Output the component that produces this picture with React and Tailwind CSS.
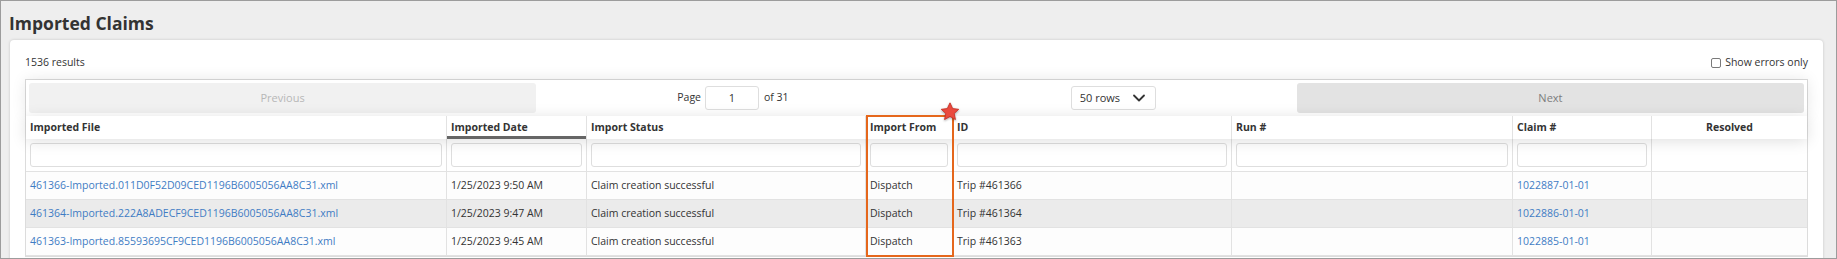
import React from 'react';
import { ChevronDown } from 'lucide-react';

const rows = [
  {
    file: '461366-Imported.011D0F52D09CED1196B6005056AA8C31.xml',
    date: '1/25/2023 9:50 AM',
    id: 'Trip #461366',
    claim: '1022887-01-01',
  },
  {
    file: '461364-Imported.222A8ADECF9CED1196B6005056AA8C31.xml',
    date: '1/25/2023 9:47 AM',
    id: 'Trip #461364',
    claim: '1022886-01-01',
  },
  {
    file: '461363-Imported.85593695CF9CED1196B6005056AA8C31.xml',
    date: '1/25/2023 9:45 AM',
    id: 'Trip #461363',
    claim: '1022885-01-01',
  },
];

const gridCols = 'grid grid-cols-[421px_140px_279px_87px_279px_281px_139px_155px]';
const cell = 'border-r border-[#e2e2e2] px-[4px] flex items-center overflow-hidden whitespace-nowrap';

const FilterInput = () => (
  <div className="h-[24px] w-full rounded-[3px] border border-[#dedede] bg-white" />
);

const App = () => {
  return (
    <div className="w-[1837px] h-[259px] overflow-hidden border border-[#9c9c9c] bg-[#eeeeee] font-['Open_Sans',sans-serif] text-[#333]">
      <h1 className="pl-[8px] pt-[11px] text-[17.5px] font-bold leading-[23px] text-[#333]">Imported Claims</h1>

      <div className="ml-[9px] mr-[13px] mt-[5px] h-[300px] rounded-[4px] bg-white px-[15px] pt-[12px] shadow-[0_0_3px_rgba(0,0,0,0.18)]">
        <div className="flex h-[22px] items-center justify-between text-[10.5px]">
          <span>1536 results</span>
          <label className="flex items-center gap-[4px]">
            <span className="h-[10px] w-[10px] rounded-[2px] border border-[#7a7a7a] bg-white" />
            <span>Show errors only</span>
          </label>
        </div>

        <div className="relative mt-[5px] border border-[#dcdcdc] text-[10.5px]">
          {/* pagination */}
          <div className="relative z-[1] flex h-[36px] bg-white p-[3px] shadow-[0_0_15px_0_rgba(0,0,0,0.1)]">
            <button className="flex-[1] rounded-[3px] bg-[#f1f1f1] text-[11px] text-[#b7b7b7]">Previous</button>
            <div className="flex flex-[1.5] items-center justify-around">
              <div className="flex items-center">
                <span>Page</span>
                <div className="ml-[4px] mr-[5px] flex h-[24px] w-[54px] items-center justify-center rounded-[3px] border border-[#dedede] text-[11px]">
                  1
                </div>
                <span>of 31</span>
              </div>
              <div className="flex h-[24px] w-[85px] items-center justify-between rounded-[3px] border border-[#dedede] pl-[8px] pr-[6px] text-[11px]">
                <span>50 rows</span>
                <ChevronDown size={20} strokeWidth={2.2} className="text-[#333]" />
              </div>
            </div>
            <button className="flex-[1] rounded-[3px] bg-[#e3e3e3] text-[11px] text-[#7d7d7d]">Next</button>
          </div>

          {/* header */}
          <div className={`${gridCols} relative z-[1] h-[23px] bg-white font-bold shadow-[0_2px_15px_0_rgba(0,0,0,0.13)]`}>
            <div className={cell}>Imported File</div>
            <div className={`${cell} shadow-[inset_0_-3px_0_0_rgba(0,0,0,0.6)]`}>Imported Date</div>
            <div className={cell}>Import Status</div>
            <div className={cell}>Import From</div>
            <div className={cell}>ID</div>
            <div className={cell}>Run #</div>
            <div className={cell}>Claim #</div>
            <div className={`${cell} justify-center border-r-0`}>Resolved</div>
          </div>

          {/* filters */}
          <div className={`${gridCols} h-[33px] border-b border-[#e2e2e2] bg-white`}>
            {[0, 1, 2, 3, 4, 5, 6].map((i) => (
              <div key={i} className="border-r border-[#e2e2e2] pl-[4px] pr-[4px] pt-[4px]">
                <FilterInput />
              </div>
            ))}
            <div />
          </div>

          {/* rows */}
          {rows.map((r, i) => (
            <div
              key={r.id}
              className={`${gridCols} h-[28px] border-b border-[#e2e2e2] ${i === 1 ? 'bg-[#ebebeb]' : 'bg-[#fdfdfd]'}`}
            >
              <div className={`${cell} text-[#3f7cc4]`}>{r.file}</div>
              <div className={cell}>{r.date}</div>
              <div className={cell}>Claim creation successful</div>
              <div className={cell}>Dispatch</div>
              <div className={cell}>{r.id}</div>
              <div className={cell}></div>
              <div className={`${cell} text-[#3f7cc4]`}>{r.claim}</div>
              <div className="px-[4px]"></div>
            </div>
          ))}

          {/* annotation */}
          <div className="absolute left-[840px] top-[35px] z-[2] h-[142px] w-[88px] border-2 border-[#e5671c]" />
          <svg
            className="absolute left-[913px] top-[21px] z-[3] drop-shadow-[0_1px_1px_rgba(0,0,0,0.35)]"
            width="22"
            height="22"
            viewBox="0 0 24 24"
          >
            <polygon
              points="12,2 14.9,8.3 21.5,9.1 16.6,13.6 17.9,20.2 12,16.9 6.1,20.2 7.4,13.6 2.5,9.1 9.1,8.3"
              fill="#ea4a3e"
              stroke="#c9332a"
              strokeWidth="1"
              strokeLinejoin="round"
            />
          </svg>
        </div>
      </div>
    </div>
  );
};

export default App;
